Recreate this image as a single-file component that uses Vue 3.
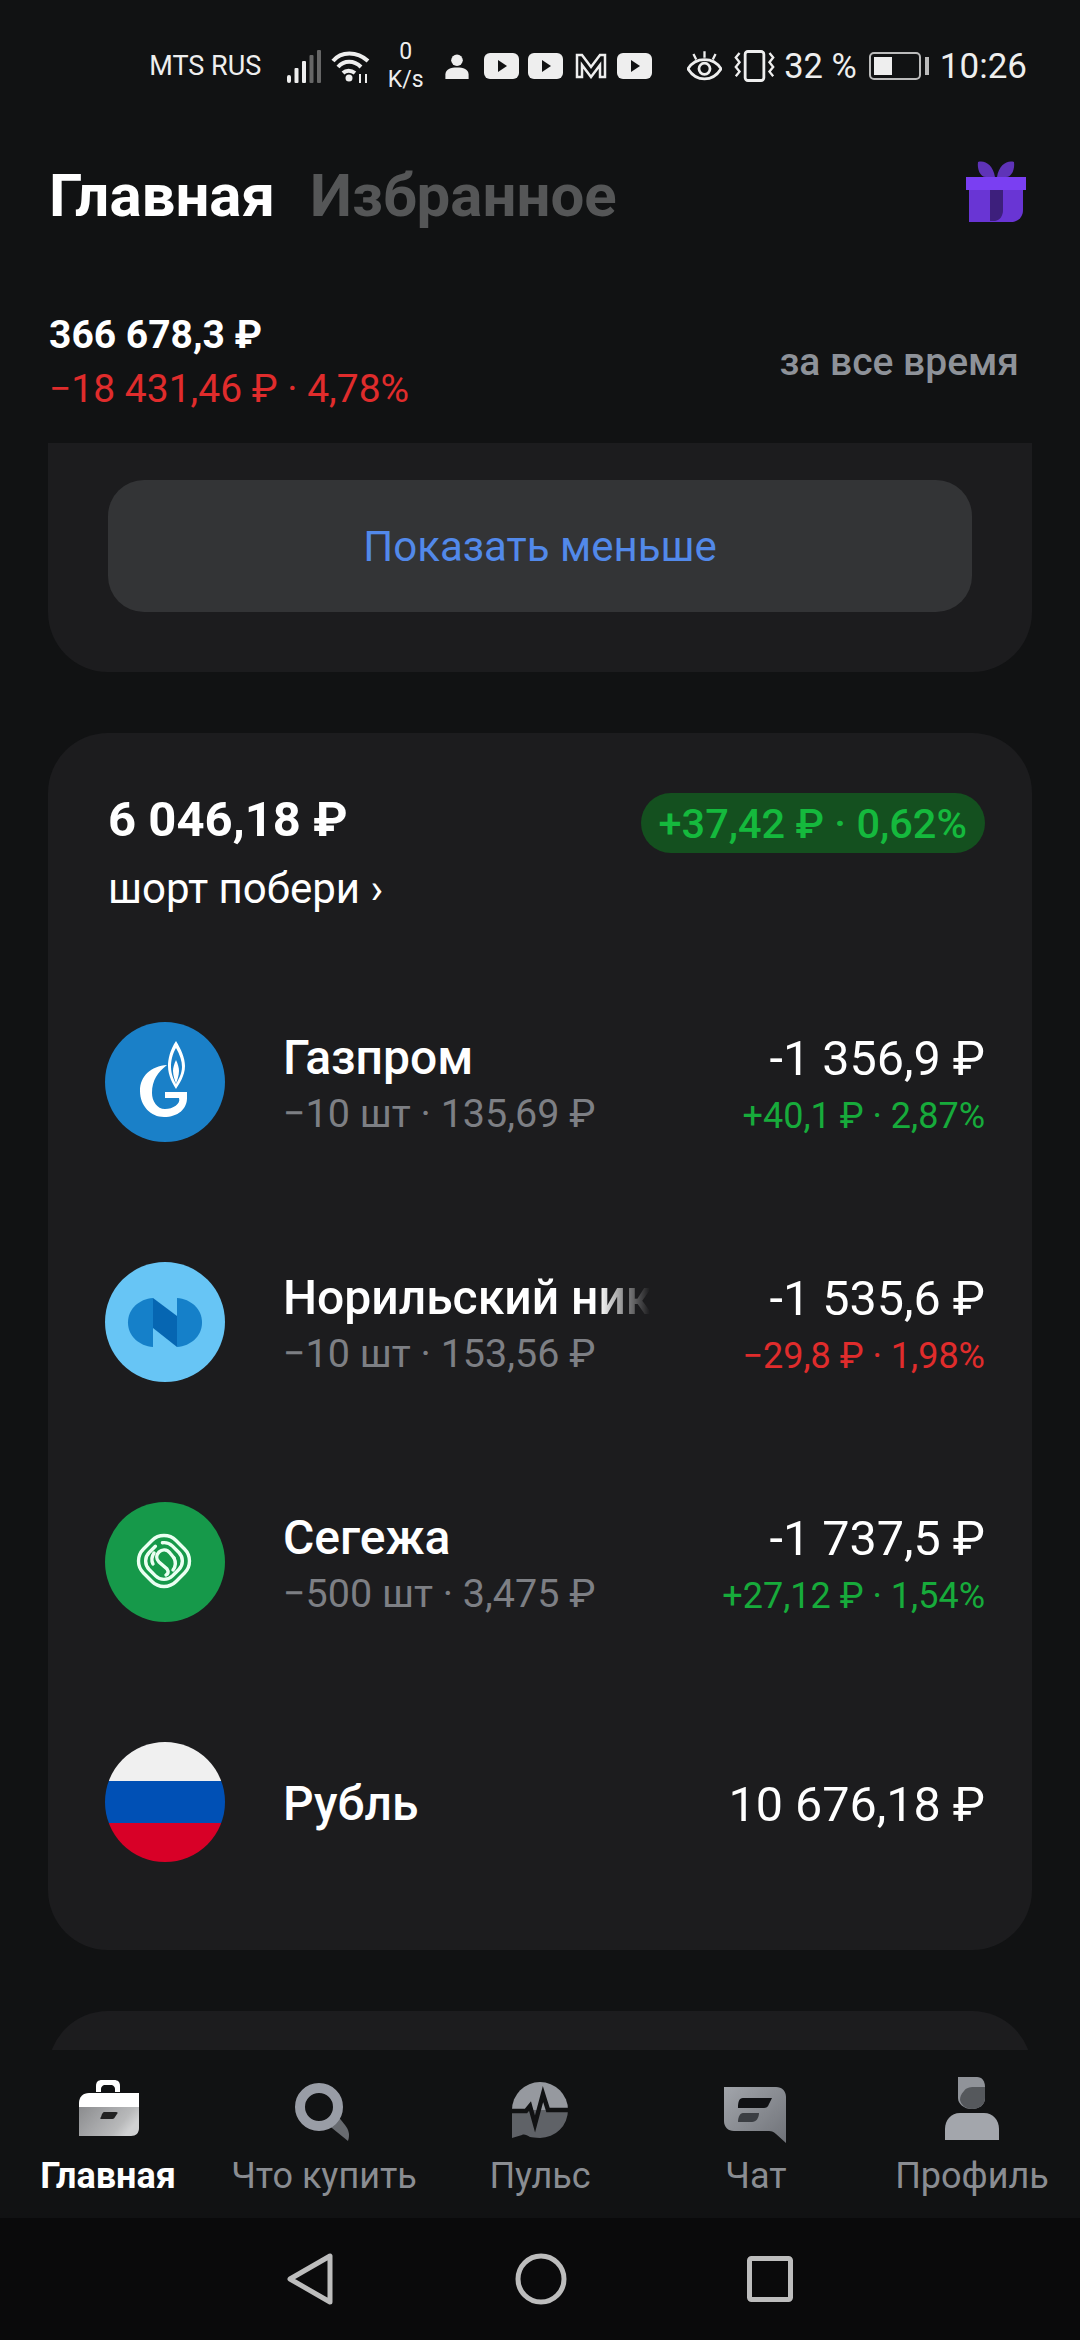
<template>
  <div class="screen">
    <div class="status">
      <span class="carrier">MTS RUS</span>
      <svg class="ic-signal" width="34" height="33" viewBox="0 0 34 33">
        <rect x="0" y="25" width="4" height="8" rx="2" fill="#eee" />
        <rect x="7.500" y="18" width="4" height="15" rx="1" fill="#eee" />
        <rect x="15" y="11" width="4" height="22" rx="1" fill="#eee" />
        <rect x="22.500" y="5" width="4" height="28" rx="1" fill="#666" />
        <rect x="30" y="0" width="4" height="33" rx="1" fill="#666" />
      </svg>
      <svg class="ic-wifi" width="40" height="33" viewBox="0 0 40 33" fill="none" stroke="#eee" stroke-width="4">
        <path d="M2 11C10 1 26 1 37 11" />
        <path d="M7 17C13 10 23 10 30 17" />
        <path d="M12 23C15 20 20 20 24 23" />
        <circle cx="18" cy="28" r="3.500" fill="#eee" stroke="none" />
        <path d="M29 24v9M35 24v9" stroke-width="2" />
      </svg>
      <div class="speed"><span>0</span><span>K/s</span></div>
      <svg class="ic-user" width="24" height="25" viewBox="0 0 26 28" fill="#eee">
        <circle cx="13" cy="7" r="6.500" />
        <path d="M0 28v-5c0-6 6-8 13-8s13 2 13 8v5z" />
      </svg>
      <div class="apps">
        <svg v-for="n in 2" :key="n" width="35" height="26" viewBox="0 0 35 26">
          <rect width="35" height="26" rx="6" fill="#eee" />
          <path d="M14 7l9 6-9 6z" fill="#111213" />
        </svg>
        <svg class="ic-mail" width="32" height="26" viewBox="0 0 32 26" fill="none" stroke="#eee" stroke-width="2.500">
          <path d="M2 24V2h5l9 12L25 2h5v22h-5V12L16 24 7 12v12z" />
        </svg>
        <svg class="ic-last" width="35" height="26" viewBox="0 0 35 26">
          <rect width="35" height="26" rx="6" fill="#eee" />
          <path d="M14 7l9 6-9 6z" fill="#111213" />
        </svg>
      </div>
      <svg class="ic-eye" width="35" height="30" viewBox="0 0 38 32" fill="none" stroke="#eee" stroke-width="3">
        <path d="M1 19C6 11 12 9 19 9s13 2 18 10c-5 8-11 11-18 11S6 27 1 19z" />
        <circle cx="19" cy="19" r="6" />
        <path d="M19 0v7M7 3l3 6M31 3l-3 6" stroke-width="2.500" />
      </svg>
      <svg class="ic-vibrate" width="43" height="32" viewBox="0 0 46 34" fill="none" stroke="#eee">
        <rect x="13" y="1.500" width="20" height="31" rx="3" stroke-width="3" />
        <path d="M7 3l-4 5 4 5-4 5 4 5-4 5M39 3l4 5-4 5 4 5-4 5 4 5" stroke-width="2.500" />
      </svg>
      <span class="battery-text">32 %</span>
      <div class="battery">
        <div class="battery-body"><div class="battery-level"></div></div>
        <div class="battery-cap"></div>
      </div>
      <span class="clock">10:26</span>
    </div>

    <div class="head">
      <div class="tabs-top">
        <span class="tab-active">Главная</span>
        <span class="tab-muted">Избранное</span>
      </div>
      <svg class="gift" width="60" height="62" viewBox="0 0 60 62">
        <path d="M12 2c7-2 15 3 17 15H20C14 17 11 9 12 2zM48 2c-7-2-15 3-17 15h9c6 0 9-8 8-15z" fill="#5f33b8" />
        <rect x="0" y="17" width="60" height="13" fill="#7a3ff2" />
        <path d="M3 30h54v20c0 7-5 12-12 12H3z" fill="#6935d4" />
        <path d="M24 30h13v20c0 6-3 10-8 11h-5z" fill="#3d1f7c" />
      </svg>
    </div>

    <div class="summary">
      <div>
        <div class="total">366 678,3 ₽</div>
        <div class="total-change">−18 431,46 ₽ · 4,78%</div>
      </div>
      <span class="period">за все время</span>
    </div>

    <div class="scroll">
      <div class="card card-top">
        <div class="less-btn">Показать меньше</div>
      </div>

      <div class="card card-list">
        <div class="list-head">
          <div>
            <div class="list-sum">6 046,18 ₽</div>
            <div class="list-name">шорт побери ›</div>
          </div>
          <span class="pill">+37,42 ₽ · 0,62%</span>
        </div>

        <div v-for="item in positions" :key="item.name" class="row">
          <div class="logo" :class="item.logo">
            <svg v-if="item.logo === 'gazprom'" width="120" height="120" viewBox="0 0 120 120">
              <path d="M71 19C65 28 63 37 63 44C63 54 68 62 71 67C74 62 80 54 80 44C80 36 76 27 71 19Z" fill="#fff" />
              <path d="M71 26C67 33 66 39 66 45C66 52 69 58 71 62C73 58 77 52 77 45C77 39 75 33 71 26Z" fill="#1a80c8" />
              <path d="M71 38C69 42 68 46 68 49C68 54 70 58 71 62C72 58 74 54 74 49C74 46 73 42 71 38Z" fill="#fff" />
              <path d="M62 43C46 44 35 54 35 69C35 84 46 95 59 95C73 95 82 87 82 76V70H60V76H74C76 82 68 87 60 87C52 87 47 79 47 71C47 58 53 50 62 43Z" fill="#fff" />
            </svg>
            <svg v-else-if="item.logo === 'nornik'" width="120" height="120" viewBox="0 0 120 120">
              <path d="M48 36c-14 1-25 11-25 24.500S34 84 48 85z" fill="#1580c9" />
              <path d="M72 36c14 1 25 11 25 24.500S86 84 72 85z" fill="#1580c9" />
              <path d="M48 36l24 18v31L48 66z" fill="#0666b2" />
            </svg>
            <svg v-else-if="item.logo === 'segezha'" width="120" height="120" viewBox="0 0 120 120" fill="none" stroke="#eafff2" stroke-width="3.400" stroke-linecap="round">
              <rect x="36" y="36" width="46" height="46" rx="17" transform="rotate(45 59 59)" />
              <rect x="42.500" y="42.500" width="33" height="33" rx="12" stroke-dasharray="92 8" transform="rotate(45 59 59)" />
              <path d="M69 56L65 51C62 47 57 47 54 50C51 53 51 57 54 60L62 67C64 70 63 72 61 73" />
              <path d="M48 62C46 58 47 54 49 51M69 56C71 60 71 64 68 68" />
            </svg>
          </div>
          <div class="row-info">
            <div class="row-name" :class="{ fade: item.long }">{{ item.name }}</div>
            <div v-if="item.sub" class="row-sub">{{ item.sub }}</div>
          </div>
          <div class="row-values">
            <div class="row-sum">{{ item.sum }}</div>
            <div v-if="item.change" class="row-change" :class="item.dir">{{ item.change }}</div>
          </div>
        </div>
      </div>

      <div class="card card-next"></div>
    </div>

    <div class="tabbar">
      <div class="tab on">
        <svg width="72" height="72" viewBox="0 0 72 72">
          <defs>
            <linearGradient id="caseGrad" x1="0" y1="0" x2="1" y2="0.4">
              <stop offset="0" stop-color="#8b8c8e" />
              <stop offset="0.45" stop-color="#a5a6a8" />
              <stop offset="0.8" stop-color="#b8b9ba" />
              <stop offset="1" stop-color="#d0d1d2" />
            </linearGradient>
          </defs>
          <g transform="translate(3 0)">
            <path d="M21 18v-6c0-4 2-6 6-6h12c4 0 6 2 6 6v6h-5v-3c0-2-1-3-3-4H29c-2 1-3 2-3 4v3z" fill="#fff" />
            <path d="M14 19h50v14H4v-4c0-6 4-10 10-10z" fill="#fff" />
            <path d="M4 33h60v21c0 5-3 8-8 8H4z" fill="url(#caseGrad)" />
            <path d="M29 38h12c2 0 2 1 1 2l-2 3c-1 2-2 2-4 2H26c-1 0-1-1 0-2l1-3c1-1 1-2 2-2z" fill="#222" />
          </g>
        </svg>
        <span>Главная</span>
      </div>
      <div class="tab">
        <svg width="72" height="72" viewBox="0 0 72 72">
          <path d="M39 50L49 41L57 51C61 56 62 61 60 67Z" fill="#686b70" />
          <circle cx="31" cy="33" r="19" fill="none" stroke="#999da6" stroke-width="10" />
        </svg>
        <span>Что купить</span>
      </div>
      <div class="tab">
        <svg width="72" height="72" viewBox="0 0 72 72">
          <path d="M8 36A28 28 0 0 1 64 36Z" fill="#96999f" />
          <path d="M8 36H64A28 28 0 0 1 36 64C31 64 28 63 26 63C23 61 20 60 18 61L8 64Z" fill="#5f6267" />
          <path d="M6 37H22L26 32L31 50L39 20L44 36H66" fill="none" stroke="#111213" stroke-width="4.500" />
        </svg>
        <span>Пульс</span>
      </div>
      <div class="tab">
        <svg width="72" height="72" viewBox="0 0 72 72">
          <defs>
            <linearGradient id="chatGrad" x1="0" y1="0" x2="1" y2="1">
              <stop offset="0" stop-color="#a2a5ab" />
              <stop offset="1" stop-color="#6f7278" />
            </linearGradient>
          </defs>
          <path d="M4 13H56C62 13 66 17 66 23V69L56 60C54 58 52 57 49 57H14C8 57 4 53 4 47Z" fill="url(#chatGrad)" />
          <path d="M23 24H52L49 30C48 33 46 34 44 34H18C18 28 19 24 23 24Z" fill="#101114" />
          <path d="M23 39H39C39 44 36 48 32 48H18C18 43 20 39 23 39Z" fill="#3b3e43" />
        </svg>
        <span>Чат</span>
      </div>
      <div class="tab">
        <svg width="72" height="72" viewBox="0 0 72 72">
          <path d="M22 3H41C46 3 49 7 49 13V24C49 31 43 35 36 35C28 35 22 30 22 24Z" fill="#909399" />
          <path d="M28 17C30 14 33 13 38 13H49V24C49 31 43 35 36 35C30 35 25 31 24 26C24 23 25 20 28 17Z" fill="#55585c" />
          <path d="M9 66V55C9 46 15 39 24 39H48C57 39 63 46 63 55V66Z" fill="#a3a6ac" />
        </svg>
        <span>Профиль</span>
      </div>
    </div>

    <div class="navbar">
      <svg width="48" height="52" viewBox="0 0 48 52" fill="none" stroke="#bdbdbd" stroke-width="5" stroke-linejoin="round">
        <path d="M43 3v46L3 26z" />
      </svg>
      <svg width="52" height="52" viewBox="0 0 52 52" fill="none" stroke="#bdbdbd" stroke-width="5">
        <circle cx="26" cy="26" r="23" />
      </svg>
      <svg width="46" height="46" viewBox="0 0 46 46" fill="none" stroke="#bdbdbd" stroke-width="5" stroke-linejoin="round">
        <rect x="2.500" y="2.500" width="41" height="41" rx="2" />
      </svg>
    </div>
  </div>
</template>

<script setup>
const positions = [
  { name: 'Газпром', sub: '−10 шт · 135,69 ₽', sum: '-1 356,9 ₽', change: '+40,1 ₽ · 2,87%', dir: 'up', logo: 'gazprom' },
  { name: 'Норильский никель', sub: '−10 шт · 153,56 ₽', sum: '-1 535,6 ₽', change: '−29,8 ₽ · 1,98%', dir: 'down', logo: 'nornik', long: true },
  { name: 'Сегежа', sub: '−500 шт · 3,475 ₽', sum: '-1 737,5 ₽', change: '+27,12 ₽ · 1,54%', dir: 'up', logo: 'segezha' },
  { name: 'Рубль', sum: '10 676,18 ₽', logo: 'flag' }
]
</script>

<style>
html,
body {
  margin: 0;
  background: #111213;
}
</style>

<style scoped>
.screen {
  width: 1080px;
  height: 2340px;
  display: flex;
  flex-direction: column;
  overflow: hidden;
  background: #111213;
  color: #fff;
  font-family: Roboto, "Noto Sans", sans-serif;
}

.status {
  height: 132px;
  flex: none;
  display: flex;
  align-items: center;
  justify-content: flex-end;
  padding-right: 53px;
  box-sizing: border-box;
  color: #eee;
}

.carrier {
  font-size: 27px;
  margin-right: 26px;
}

.ic-wifi {
  margin-left: 10px;
}

.speed {
  display: flex;
  flex-direction: column;
  align-items: center;
  font-size: 23px;
  line-height: 28px;
  margin-left: 17px;
  width: 35px;
}

.ic-user {
  margin-left: 22px;
}

.apps {
  display: flex;
  align-items: center;
  gap: 9px;
  margin-left: 15px;
}

.ic-mail {
  margin-left: 3px;
}

.ic-last {
  margin-left: 1px;
}

.ic-eye {
  margin-left: 35px;
}

.ic-vibrate {
  margin-left: 11px;
}

.battery-text {
  font-size: 34.500px;
  margin-left: 8px;
}

.battery {
  display: flex;
  align-items: center;
  margin-left: 12px;
}

.battery-body {
  width: 52px;
  height: 28px;
  box-sizing: border-box;
  border: 2px solid #bbb;
  border-radius: 5px;
  padding: 3px;
}

.battery-level {
  width: 44%;
  height: 100%;
  background: #eee;
}

.battery-cap {
  width: 4px;
  height: 18px;
  background: #bbb;
  margin-left: 4px;
}

.clock {
  font-size: 35px;
  margin-left: 11px;
}

.head {
  height: 118px;
  flex: none;
  display: flex;
  align-items: center;
  justify-content: space-between;
  padding: 8px 54px 0 49px;
  box-sizing: border-box;
}

.tabs-top {
  display: flex;
  gap: 35px;
  font-size: 60px;
  font-weight: 700;
}

.tab-muted {
  color: #555657;
}

.gift {
  margin-bottom: 8px;
}

.summary {
  height: 193px;
  flex: none;
  display: flex;
  align-items: flex-start;
  justify-content: space-between;
  padding: 60px 61px 0 49px;
  box-sizing: border-box;
}

.total {
  font-size: 39px;
  font-weight: 700;
  line-height: 50px;
}

.total-change {
  font-size: 39px;
  line-height: 54px;
  margin-top: 2px;
  color: #e02c2c;
}

.period {
  font-size: 39px;
  font-weight: 500;
  color: #8e9299;
  margin-top: 29px;
}

.scroll {
  flex: 1;
  min-height: 0;
  overflow: hidden;
  display: flex;
  flex-direction: column;
  gap: 61px;
  padding: 0 48px;
}

.card {
  flex: none;
  background: #1c1c1e;
  border-radius: 60px;
}

.card-top {
  padding: 37px 60px 60px;
  border-radius: 0 0 60px 60px;
}

.less-btn {
  height: 132px;
  display: flex;
  align-items: center;
  justify-content: center;
  border-radius: 36px;
  background: #333436;
  color: #5289ea;
  font-size: 42px;
}

.card-list {
  padding: 0 47px 28px 60px;
}

.list-head {
  height: 229px;
  display: flex;
  justify-content: space-between;
  align-items: flex-start;
  padding-top: 58px;
  box-sizing: border-box;
}

.list-sum {
  font-size: 49px;
  font-weight: 700;
  line-height: 58px;
}

.list-name {
  font-size: 42px;
  line-height: 48px;
  margin-top: 16px;
}

.pill {
  height: 60px;
  display: flex;
  align-items: center;
  padding: 0 18px;
  margin-top: 2px;
  border-radius: 30px;
  background: #14501f;
  color: #15b93d;
  font-size: 41.500px;
  font-weight: 500;
}

.row {
  height: 240px;
  display: flex;
  align-items: center;
  margin-left: -3px;
}

.logo {
  width: 120px;
  height: 120px;
  flex: none;
  border-radius: 50%;
  overflow: hidden;
}

.gazprom {
  background: #1a80c8;
}

.nornik {
  background: #67c5f5;
}

.segezha {
  background: #16994a;
}

.flag {
  background: linear-gradient(#f0f0f0 32.5%, #0050b5 32.5% 67.5%, #d80027 67.5%);
}

.row-info {
  width: 367px;
  margin-left: 58px;
  padding-top: 4px;
  flex: none;
}

.row-name {
  font-size: 48px;
  font-weight: 500;
  line-height: 52px;
  white-space: nowrap;
}

.row-name.fade {
  overflow: hidden;
  -webkit-mask-image: linear-gradient(90deg, #000 86%, transparent);
  mask-image: linear-gradient(90deg, #000 86%, transparent);
}

.row-sub {
  font-size: 39.500px;
  line-height: 44px;
  margin-top: 8px;
  color: #7d7f84;
  white-space: nowrap;
}

.row-values {
  flex: 1;
  min-width: 0;
  padding-top: 6px;
  text-align: right;
  white-space: nowrap;
}

.row-sum {
  font-size: 48.500px;
  line-height: 52px;
  margin-bottom: 9px;
}

.row-sum:last-child {
  margin-bottom: 0;
}

.row-change {
  font-size: 36px;
  line-height: 44px;
}

.up {
  color: #17ab3b;
}

.down {
  color: #e02c2c;
}

.card-next {
  height: 120px;
}

.tabbar {
  height: 168px;
  flex: none;
  display: grid;
  grid-template-columns: repeat(5, 1fr);
  background: #111213;
  box-sizing: border-box;
}

.tab {
  display: flex;
  flex-direction: column;
  align-items: center;
  padding-top: 24px;
  color: #8a8d92;
  font-size: 36px;
  line-height: 44px;
  white-space: nowrap;
}

.tab svg {
  display: block;
  margin-bottom: 8px;
}

.tab.on {
  color: #fff;
  font-weight: 700;
}

.navbar {
  height: 122px;
  flex: none;
  display: flex;
  align-items: center;
  justify-content: center;
  gap: 180px;
  background: #0a0a0b;
}
</style>
